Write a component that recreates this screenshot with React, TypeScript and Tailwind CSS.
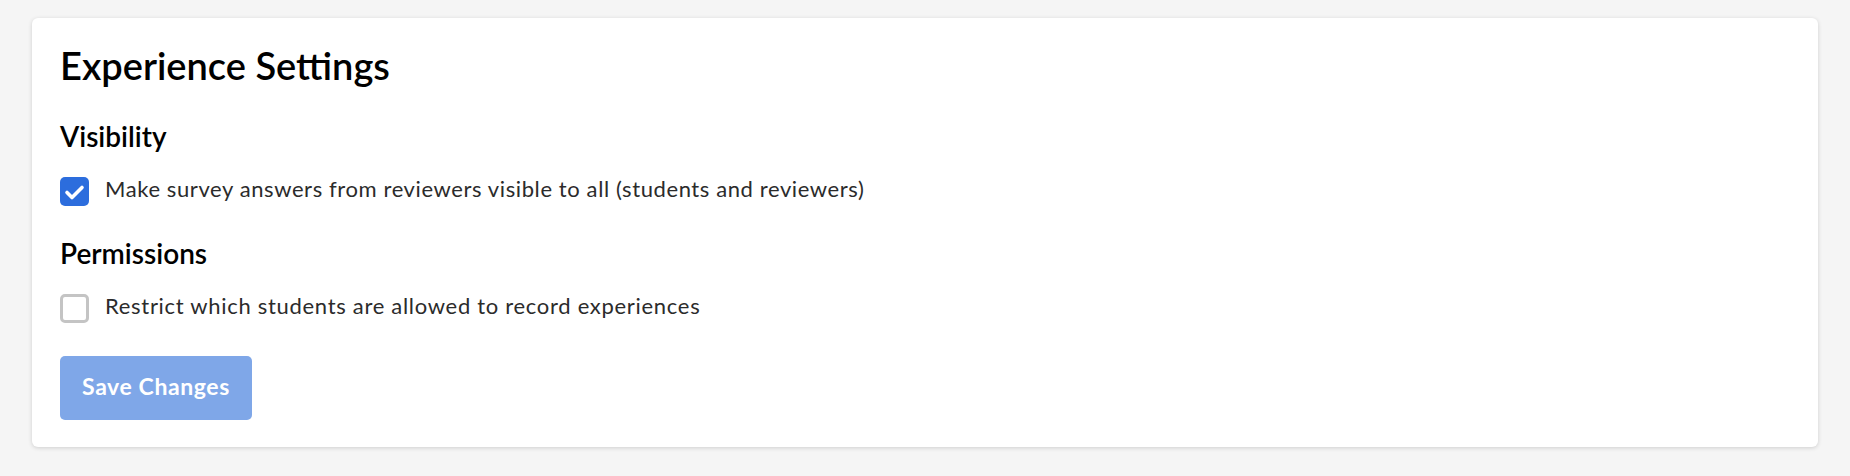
import { useState } from 'react';

function Checkbox({ checked, onChange }: { checked: boolean; onChange: () => void }) {
  return (
    <button
      type="button"
      onClick={onChange}
      className={`w-[29px] h-[29px] shrink-0 rounded-[5px] flex items-center justify-center ${
        checked ? 'bg-[#2c6ddd]' : 'bg-white border-[3px] border-[#c4c4c4]'
      }`}
    >
      {checked && (
        <svg width="29" height="29" viewBox="0 0 29 29" fill="none">
          <path d="M7 15.5l5 5L22 10.5" stroke="white" strokeWidth="3.6" strokeLinecap="round" strokeLinejoin="round" />
        </svg>
      )}
    </button>
  );
}

export default function App() {
  const [visible, setVisible] = useState(true);
  const [restrict, setRestrict] = useState(false);

  return (
    <div className="min-h-screen bg-[#f5f5f5] pt-[18px] px-[32px] font-['Lato',sans-serif]">
      <div className="bg-white rounded-[6px] shadow-[0_1px_4px_rgba(0,0,0,0.16)] pt-[23px] pb-[27px] px-[28px]">
        <h1 className="text-[38px] leading-[48px] font-semibold text-black">Experience Settings</h1>

        {/* Visibility */}
        <h2 className="mt-[29px] text-[28px] leading-[36px] font-semibold text-black">Visibility</h2>
        <label className="mt-[23px] flex items-start gap-[16px]">
          <Checkbox checked={visible} onChange={() => setVisible(!visible)} />
          <span className="text-[22px] leading-[24px] tracking-[0.6px] text-[#2b2b2b]">
            Make survey answers from reviewers visible to all (students and reviewers)
          </span>
        </label>

        {/* Permissions */}
        <h2 className="mt-[29px] text-[28px] leading-[36px] font-semibold text-black">Permissions</h2>
        <label className="mt-[23px] flex items-start gap-[16px]">
          <Checkbox checked={restrict} onChange={() => setRestrict(!restrict)} />
          <span className="text-[22px] leading-[24px] tracking-[0.7px] text-[#2b2b2b]">
            Restrict which students are allowed to record experiences
          </span>
        </label>

        <button
          type="button"
          disabled
          className="mt-[33px] w-[192px] h-[64px] pb-[4px] rounded-[5px] bg-[#7fa7e8] text-white text-[23px] tracking-[0.6px] font-bold"
        >
          Save Changes
        </button>
      </div>
    </div>
  );
}
